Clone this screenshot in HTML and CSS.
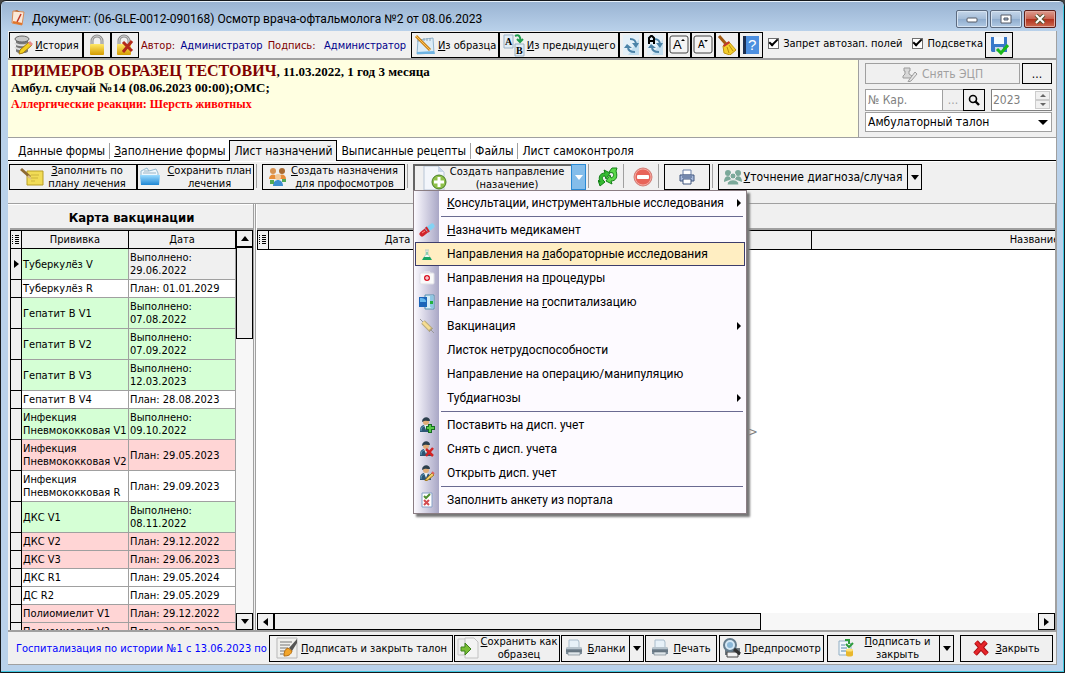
FILE: index.html
```
<!DOCTYPE html>
<html lang="ru">
<head>
	<meta charset="UTF-8">
	<title>Документ</title>
	<link rel="stylesheet" href="styles.css">
</head>
<body>

	<svg class="defs">
		<symbol id="lock" viewBox="0 0 20 22">
			<path d="M5 11V7a5 5 0 0 1 10 0v4" fill="none" stroke="#8c8c8c" stroke-width="3"/>
			<path d="M5 11V7a5 5 0 0 1 10 0v4" fill="none" stroke="#d8d8d8" stroke-width="1"/>
			<rect x="3" y="10" width="14" height="11" rx="1" fill="url(#gold)"/>
		</symbol>
		<symbol id="printer" viewBox="0 0 18 18">
			<path d="M4 1h9l1 2v6H4z" fill="#e7f1f8" stroke="#a9bccb"/>
			<path d="M2 8h14l1 2v5H1v-5z" fill="#7e8e9b"/>
			<path d="M2 8h14l1 2H1z" fill="#b6c3cc"/>
			<path d="M3 13h12v3H3z" fill="#dfe6ea" stroke="#69767f" stroke-width=".6"/>
			<path d="M1 12h16" stroke="#56646e"/>
		</symbol>
		<symbol id="person" viewBox="0 0 16 16">
			<path d="M1 15c0-5 1-7 5-7s6 2 6 7z" fill="#2c5674"/>
			<path d="M5 8l2 5 2-5z" fill="#e8f0f4"/>
			<circle cx="7" cy="5" r="3" fill="#e0ad78"/>
			<path d="M3 5c0-6 8-6 8-1-3 0-5-1-8 1z" fill="#2d3f4c"/>
			<path d="M2 14c0-3 1-4 3-5" fill="none" stroke="#65a0bf"/>
		</symbol>
		<symbol id="sheet" viewBox="0 0 18 22">
			<path d="M1 1h16v20H1z" fill="#e4f0f8"/>
			<path d="M6 21L17 5v16z" fill="#c3dff0"/>
			<path d="M8 5c4 0 6 1 6 6M13 18c-5 0-7-2-7-5" fill="none" stroke="#4c83a8" stroke-width="2"/>
			<path d="M10 9h7l-3 5zM2 14l3-4 5 4z" fill="#4c83a8"/>
		</symbol>
		<symbol id="dots" viewBox="0 0 8 10">
			<path d="M0 .5h1M3 .5h4M0 2.500h1M3 2.500h4M0 4.500h1M3 4.500h4M0 6.500h1M3 6.500h4M0 8.500h1M3 8.500h4" stroke="#000"/>
		</symbol>
		<linearGradient id="gold" x1="0" x2="0" y1="0" y2="1">
			<stop offset="0" stop-color="#ffe969"/>
			<stop offset="1" stop-color="#d59b00"/>
		</linearGradient>
		<linearGradient id="blue" x1="0" x2="0" y1="0" y2="1">
			<stop offset="0" stop-color="#9cdcff"/>
			<stop offset="1" stop-color="#1e86d4"/>
		</linearGradient>
	</svg>

	<div class="window">
		<div class="titlebar">
			<svg class="logo" width="14" height="16" viewBox="0 0 14 16">
				<path d="M2 1l11 1-2 13-10-2z" fill="#fbe9d8" stroke="#d98a55"/>
				<path d="M3 1l3-1 3 2z" fill="#b5652f"/>
				<path d="M10 4l-4 8" stroke="#c0392b" stroke-width="1.5"/>
				<path d="M2 12l9 2" stroke="#e0742a" stroke-width="2"/>
			</svg>
			<span class="caption">Документ: (06-GLE-0012-090168) Осмотр врача-офтальмолога №2 от 08.06.2023</span>
			<button class="win" aria-label="Свернуть"><svg width="12" height="10"><rect x="1" y="4" width="10" height="4" rx="1" fill="#fff" stroke="#555a66"/></svg></button>
			<button class="win" aria-label="Развернуть"><svg width="12" height="10"><path d="M1 1h10v8H1z" fill="#fff" stroke="#555a66"/><path d="M4 4h4v2H4z" fill="#9db6d2" stroke="#555a66"/></svg></button>
			<button class="win close" aria-label="Закрыть окно"><svg width="12" height="10"><path d="M2 1l8 8M10 1L2 9" stroke="#553" stroke-width="4"/><path d="M2 1l8 8M10 1L2 9" stroke="#fff" stroke-width="2"/></svg></button>
		</div>

		<div class="content">
			<div class="topbar">
				<button class="btn history">
					<svg width="20" height="20" viewBox="0 0 20 20">
						<path d="M3 4v12c0 3 12 3 12 0V4z" fill="#777"/>
						<ellipse cx="9" cy="4" rx="7" ry="3" fill="#c9c9c9" stroke="#666"/>
						<path d="M2 8c2 3 12 3 14 0M2 12c2 3 12 3 14 0" fill="none" stroke="#ddd" stroke-width="2"/>
						<path d="M7 15l9-8 3 3-9 8-4 1z" fill="#f3d021" stroke="#a67d0c"/>
						<path d="M15 8l2-2 3 3-2 2z" fill="#e68a8a"/>
					</svg>
					<span><u>И</u>стория</span>
				</button>
				<button class="btn w28" aria-label="Заблокировать"><svg width="20" height="22"><use href="#lock"/></svg></button>
				<button class="btn w28" aria-label="Снять блокировку"><svg width="22" height="22" viewBox="0 0 22 22"><use href="#lock" width="20" height="22"/><path d="M9 8l9 9M18 7l-9 11" stroke="#b32a1c" stroke-width="3"/></svg></button>
				<span class="who first">Автор:</span>
				<span class="name">Администратор</span>
				<span class="who">Подпись:</span>
				<span class="name">Администратор</span>
				<button class="btn sample">
					<svg width="22" height="22" viewBox="0 0 22 22">
						<path d="M4 6l15-2 1 15-17 1z" fill="#dcecf7" stroke="#8fb4cf"/>
						<path d="M4 5v3M7 5v3M10 4v3M13 4v3M16 4v3" stroke="#8aa2b5"/>
						<path d="M3 18l17-1 1 3H3z" fill="#6fb4e3"/>
						<path d="M2 2l14 14" stroke="#c9841b" stroke-width="3"/>
						<path d="M2 2l14 14" stroke="#ffc251"/>
					</svg>
					<span><u>И</u>з образца</span>
				</button>
				<button class="btn previous">
					<svg width="22" height="24" viewBox="0 0 22 24">
						<path d="M1 2h9v13H1zM12 11h9v12h-9z" fill="#e2edf6" stroke="#9db3c6"/>
						<text x="2" y="12" class="letter">A</text>
						<text x="13" y="21" class="letter">B</text>
						<path d="M12 3c4-2 6 1 5 5M14 6l3 3 3-3" fill="none" stroke="#1f9b4c" stroke-width="2"/>
					</svg>
					<span><u>И</u>з предыдущего</span>
				</button>
				<button class="btn w24" aria-label="Обновить"><svg width="18" height="22"><use href="#sheet"/></svg></button>
				<button class="btn w24" aria-label="Обновить все"><svg width="18" height="22" viewBox="0 0 18 22"><use href="#sheet"/><path d="M3 10V4l2-2h1l2 2v6M3 7h5" fill="none" stroke="#000" stroke-width="2"/></svg></button>
				<button class="btn w24" aria-label="Крупнее"><svg width="20" height="20" viewBox="0 0 20 20"><rect x="1" y="1" width="18" height="17" rx="2" fill="#f4f4f4" stroke="#444"/><text x="4" y="14" class="big">A</text><path d="M12 6l2-2 2 2z"/></svg></button>
				<button class="btn w24" aria-label="Мельче"><svg width="20" height="20" viewBox="0 0 20 20"><rect x="1" y="1" width="18" height="17" rx="2" fill="#f4f4f4" stroke="#444"/><text x="5" y="13" class="small">A</text><path d="M11 5h4l-2 2z"/></svg></button>
				<button class="btn w24" aria-label="Очистить">
					<svg width="20" height="20" viewBox="0 0 20 20">
						<path d="M2 1l7 8" stroke="#a35a12" stroke-width="3"/>
						<path d="M6 11l6-4 7 8-6 5-6-2z" fill="#f3ce2c" stroke="#c1930d"/>
						<path d="M6 10l6-4 1 2-6 4z" fill="#c2382b"/>
						<path d="M10 12l2 6M12 10l4 6" stroke="#b98d0e"/>
					</svg>
				</button>
				<button class="btn w24" aria-label="Справка"><svg width="18" height="20" viewBox="0 0 18 20"><path d="M1 1h16v18H1z" fill="#4c8fe0"/><path d="M1 1h3v18H1z" fill="#1c2f50"/><text x="6" y="15" class="quest">?</text></svg></button>
				<label class="check"><input type="checkbox" checked>Запрет автозап. полей</label>
				<label class="check"><input type="checkbox" checked>Подсветка</label>
				<button class="btn w28" aria-label="Сохранить">
					<svg width="20" height="20" viewBox="0 0 20 20">
						<path d="M2 2h16v15H3l-1-1z" fill="#3878c9"/>
						<path d="M5 2h10v7H5z" fill="#f5faff"/>
						<path d="M6 12h8v5H6z" fill="#ccd9e8"/>
						<path d="M8 14l4 4 7-8" fill="none" stroke="#19b819" stroke-width="3"/>
					</svg>
				</button>
			</div>

			<div class="header">
				<div class="patient">
					<b class="fio">ПРИМЕРОВ ОБРАЗЕЦ ТЕСТОВИЧ</b><b>, 11.03.2022, 1 год 3 месяца</b><br>
					<b>Амбул. случай №14 (08.06.2023 00:00);ОМС;</b><br>
					<b class="allergy">Аллергические реакции: Шерсть животных</b>
				</div>
				<div class="card">
					<div class="row">
						<button class="btn sign" disabled>
							<svg width="16" height="16" viewBox="0 0 16 16"><path d="M2 2h6v3H7v3l3 2v2H1v-2l2-2V5H2z" fill="#d8d8d8" stroke="#9b9b9b"/><path d="M7 14l6-8 2 2-6 7-3 1z" fill="#e6e6e6" stroke="#9b9b9b"/></svg>
							<span>Снять ЭЦП</span>
						</button>
						<button class="btn dots">...</button>
					</div>
					<div class="row numbers">
						<input class="number" type="text" placeholder="№ Кар." aria-label="Номер карты" disabled>
						<button class="btn more" disabled>...</button>
						<button class="btn find" aria-label="Найти"><svg width="12" height="12" viewBox="0 0 12 12"><circle cx="5" cy="5" r="3.5" fill="none" stroke="#000" stroke-width="1.6"/><path d="M7 7l4 4" stroke="#000" stroke-width="2.4"/></svg></button>
						<div class="year">
							<input type="text" value="2023" aria-label="Год">
							<div class="spin">
								<button aria-label="Больше"><i class="up"></i></button>
								<button aria-label="Меньше"><i class="down"></i></button>
							</div>
						</div>
					</div>
					<div class="combo">
						<select aria-label="Вид талона"><option>Амбулаторный талон</option></select>
					</div>
				</div>
			</div>

			<div class="tabs">
				<button class="tab"><u>Д</u>анные формы</button>
				<button class="tab"><u>З</u>аполнение формы</button>
				<button class="tab active">Лист назначений</button>
				<button class="tab">Выписанные рецепты</button>
				<button class="tab">Файлы</button>
				<button class="tab">Лист самоконтроля</button>
			</div>

			<div class="tools">
				<button class="btn fill">
					<svg width="24" height="20" viewBox="0 0 24 20">
						<path d="M7 4h16v14H7z" fill="#f1dc56" stroke="#b89d22"/>
						<path d="M11 8h8M11 11h7M11 14h4" stroke="#cdb43a"/>
						<path d="M1 2l9 8" stroke="#8d6a32" stroke-width="3"/>
						<path d="M9 8l3 5-5-3z" fill="#ddc189"/>
					</svg>
					<span><u>З</u>аполнить по<br>плану лечения</span>
				</button>
				<button class="btn keep">
					<svg width="22" height="22" viewBox="0 0 22 22">
						<path d="M2 5l6-3 2 3 7-2 2 4v6H2z" fill="#eef7fc" stroke="#94b9d0"/>
						<path d="M4 7h13M5 5h5" stroke="#9bb4c5"/>
						<path d="M1 9h20l-1 10H2z" fill="url(#blue)"/>
					</svg>
					<span><u>С</u>охранить план<br>лечения</span>
				</button>
				<i class="split"></i>
				<button class="btn prof">
					<svg width="18" height="20" viewBox="0 0 18 20">
						<circle cx="4" cy="4" r="3" fill="#d79352"/><circle cx="13" cy="4" r="3" fill="#a86a31"/>
						<path d="M0 12c0-6 8-6 8 0zM9 12c0-6 8-6 8 0z" fill="#e78d38"/>
						<circle cx="9" cy="10" r="3" fill="#f2c796"/>
						<path d="M4 19c0-8 10-8 10 0z" fill="#3b8ed0"/>
						<path d="M1 13h4v4H1zM13 12h4v3h-4z" fill="#52a954"/>
					</svg>
					<span><u>С</u>оздать назначения<br>для профосмотров</span>
				</button>
				<i class="split"></i>

				<div class="create">
					<button class="btn direct">
						<svg width="26" height="24" viewBox="0 0 26 24">
							<path d="M2 0h14l6 6v18H2z" fill="#f3f6fb" stroke="#b8c5d6"/>
							<path d="M16 0v6h6z" fill="#c9d8ea"/>
							<circle cx="17" cy="16" r="7" fill="#8fc04a" stroke="#477d24"/>
							<path d="M17 11v10M12 16h10" stroke="#fff" stroke-width="3"/>
						</svg>
						<span>Создать направление<br>(назачение)</span>
					</button>
					<button class="arrow open" aria-label="Открыть меню"><i class="down"></i></button>

					<div class="menu">
						<button class="item more-items"><span><u>К</u>онсультации, инструментальные исследования</span></button>
						<hr>
						<button class="item">
							<svg class="ico" viewBox="0 0 16 16"><path d="M3 12l5-4" stroke="#d1242a" stroke-width="5" stroke-linecap="round"/><path d="M9 7l4-3" stroke="#83d3f4" stroke-width="5" stroke-linecap="round"/><path d="M7 5l3 5" stroke="#d1242a" stroke-width="2"/><path d="M3 11l3-2" stroke="#ff8b83"/></svg>
							<span><u>Н</u>азначить медикамент</span>
						</button>
						<button class="item selected">
							<svg class="ico" viewBox="0 0 16 16"><path d="M6 4h4M7 4v4l-3 5h8L9 8V4" fill="#eefaf5" stroke="#bdcec8"/><path d="M5 11h6l2 3H3z" fill="#17a663"/><path d="M8 6v3" stroke="#40b681"/></svg>
							<span>Направления на <u>л</u>абораторные исследования</span>
						</button>
						<button class="item">
							<svg class="ico" viewBox="0 0 16 16"><path d="M5 4V2h6v2" fill="none" stroke="#eee"/><rect x="1" y="3" width="14" height="11" rx="1" fill="#fafafa" stroke="#dedee5"/><circle cx="8" cy="8" r="3" fill="#d90f1e"/><path d="M8 6v4M6 8h4" stroke="#fff"/></svg>
							<span>Направления на <u>п</u>роцедуры</span>
						</button>
						<button class="item">
							<svg class="ico" viewBox="0 0 16 16"><path d="M6 1h9v14H6z" fill="#d7edf6" stroke="#5590b0"/><path d="M11 2l3-1v14l-3-2z" fill="#8ec7e5"/><path d="M0 3h8v10H0z" fill="#1c65b8"/><path d="M1 4c4 0 6 1 6 4H1z" fill="#67b8ed"/><path d="M11 7h3v3h-3z" fill="#24b23e"/></svg>
							<span>Направление на <u>г</u>оспитализацию</span>
						</button>
						<button class="item more-items">
							<svg class="ico" viewBox="0 0 16 16"><path d="M1 1l3 3M12 12l3 3M14 10l-4 4" stroke="#999"/><path d="M4 4l8 8" stroke="#b7a87b" stroke-width="5"/><path d="M4 4l7 7" stroke="#f6dc91" stroke-width="3"/></svg>
							<span>Вакцинация</span>
						</button>
						<button class="item"><span>Листок нетрудоспособности</span></button>
						<button class="item"><span>Направление на операцию/манипуляцию</span></button>
						<button class="item more-items"><span>Тубдиагнозы</span></button>
						<hr>
						<button class="item">
							<svg class="ico" viewBox="0 0 16 16"><use href="#person"/><path d="M11 7v9M7 11h9" stroke="#176c23" stroke-width="4"/><path d="M11 8v7M8 11h7" stroke="#58ca48" stroke-width="2"/></svg>
							<span>Поставить на дисп. учет</span>
						</button>
						<button class="item">
							<svg class="ico" viewBox="0 0 16 16"><use href="#person"/><path d="M7 8l7 7M14 7l-7 8" stroke="#d32424" stroke-width="2.5"/></svg>
							<span>Снять с дисп. учета</span>
						</button>
						<button class="item">
							<svg class="ico" viewBox="0 0 16 16"><use href="#person"/><path d="M7 14l6-6 2 2-6 5-3 1z" fill="#f1d16b" stroke="#a37922"/><path d="M13 7l2 2" stroke="#df6260" stroke-width="2"/></svg>
							<span>Открыть дисп. учет</span>
						</button>
						<hr>
						<button class="item">
							<svg class="ico" viewBox="0 0 16 16"><path d="M3 1h10v14H3z" fill="#fff" stroke="#87a2c8"/><path d="M5 4l2 2 4-4" fill="none" stroke="#508e31" stroke-width="2"/><path d="M5 8l5 5M10 8l-5 5" stroke="#d34b50" stroke-width="2"/></svg>
							<span>Заполнить анкету из портала</span>
						</button>
					</div>
				</div>

				<i class="split"></i>
				<button class="flat" aria-label="Обновить список">
					<svg width="20" height="20" viewBox="0 0 20 20">
						<path d="M2 15c-2-5 0-9 5-9l-1-3 6 3-4 6-1-3c-3 0-3 2-2 4l2 2-5 4-2-6z" fill="#35bb32" stroke="#137f17"/>
						<path d="M18 4c2 6 0 10-5 10l1 3-6-3 4-6 1 3c3-1 3-3 2-5l-4-1 3-4h5z" fill="#5bd94a" stroke="#137f17"/>
					</svg>
				</button>
				<i class="split"></i>
				<button class="flat" aria-label="Удалить"><svg width="20" height="20" viewBox="0 0 20 20"><circle cx="10" cy="10" r="9" fill="#e8645a" stroke="#cf817a"/><circle cx="10" cy="10" r="8" fill="none" stroke="#f4aaa2"/><rect x="4" y="8" width="12" height="4" rx="1" fill="#fff"/></svg></button>
				<i class="split"></i>
				<button class="btn print" aria-label="Печать">
					<svg width="16" height="16" viewBox="0 0 16 16"><path d="M4 1h8v5H4z" fill="#fff" stroke="#6b80a8"/><path d="M1 6h14v6H1z" fill="#a9bbdc" stroke="#40577f"/><path d="M4 10h8v5H4z" fill="#fff" stroke="#40577f"/><path d="M3 8h10" stroke="#40577f"/></svg>
				</button>
				<i class="split"></i>
				<button class="btn diag">
					<svg width="18" height="18" viewBox="0 0 18 18"><g fill="#7ba99a"><circle cx="4" cy="5" r="3"/><circle cx="14" cy="5" r="3"/><path d="M0 14c0-7 6-7 8-3zM18 14c0-7-6-7-8-3z"/></g><g fill="#7ba99a" stroke="#f0f0f0"><circle cx="9" cy="8" r="3"/><path d="M3 17c0-7 12-7 12 0z"/></g></svg>
					<span><u>У</u>точнение диагноза/случая</span>
				</button>
				<button class="btn drop" aria-label="Варианты уточнения"><i class="down"></i></button>
			</div>

			<div class="work">
				<div class="panel vaccines">
					<div class="panel-title">Карта вакцинации</div>
					<div class="grid">
						<div class="rows">
							<table>
								<thead>
									<tr><th class="mark"><svg width="8" height="10"><use href="#dots"/></svg></th><th>Прививка</th><th>Дата</th></tr>
								</thead>
								<tbody>
									<tr class="done current"><td class="mark"><i class="right"></i></td><td>Туберкулёз V</td><td>Выполнено:<br>29.06.2022</td></tr>
									<tr><td class="mark"></td><td>Туберкулёз R</td><td>План: 01.01.2029</td></tr>
									<tr class="done"><td class="mark"></td><td>Гепатит B V1</td><td>Выполнено:<br>07.08.2022</td></tr>
									<tr class="done"><td class="mark"></td><td>Гепатит B V2</td><td>Выполнено:<br>07.09.2022</td></tr>
									<tr class="done"><td class="mark"></td><td>Гепатит B V3</td><td>Выполнено:<br>12.03.2023</td></tr>
									<tr><td class="mark"></td><td>Гепатит B V4</td><td>План: 28.08.2023</td></tr>
									<tr class="done"><td class="mark"></td><td>Инфекция<br>Пневмококковая V1</td><td>Выполнено:<br>09.10.2022</td></tr>
									<tr class="late"><td class="mark"></td><td>Инфекция<br>Пневмококковая V2</td><td>План: 29.05.2023</td></tr>
									<tr><td class="mark"></td><td>Инфекция<br>Пневмококковая R</td><td>План: 29.09.2023</td></tr>
									<tr class="done"><td class="mark"></td><td>ДКС V1</td><td>Выполнено:<br>08.11.2022</td></tr>
									<tr class="late"><td class="mark"></td><td>ДКС V2</td><td>План: 29.12.2022</td></tr>
									<tr class="late"><td class="mark"></td><td>ДКС V3</td><td>План: 29.06.2023</td></tr>
									<tr><td class="mark"></td><td>ДКС R1</td><td>План: 29.05.2024</td></tr>
									<tr><td class="mark"></td><td>ДС R2</td><td>План: 29.05.2029</td></tr>
									<tr class="late"><td class="mark"></td><td>Полиомиелит V1</td><td>План: 29.12.2022</td></tr>
									<tr class="late"><td class="mark"></td><td>Полиомиелит V2</td><td>План: 29.05.2023</td></tr>
								</tbody>
							</table>
						</div>
						<div class="vscroll">
							<button aria-label="Вверх"><i class="up"></i></button>
							<div class="thumb"></div>
							<button class="end" aria-label="Вниз"><i class="down"></i></button>
						</div>
					</div>
				</div>

				<div class="panel orders">
					<div class="panel-title"></div>
					<div class="heads">
						<span class="mark"><svg width="8" height="10"><use href="#dots"/></svg></span>
						<span class="date">Дата</span>
						<span class="blank"></span>
						<span class="title">Название</span>
					</div>
					<div class="empty">&gt;</div>
					<div class="hscroll">
						<button aria-label="Влево"><i class="left"></i></button>
						<div class="thumb"></div>
						<button class="end" aria-label="Вправо"><i class="right"></i></button>
					</div>
				</div>
			</div>

			<div class="footer">
				<span class="note">Госпитализация по истории №1 с 13.06.2023 по</span>
				<button class="btn signclose">
					<svg width="24" height="22" viewBox="0 0 24 22">
						<path d="M2 1h20v20H2z" fill="#f0f0ee" stroke="#b7b7b7"/>
						<path d="M5 5h12M5 8h10M5 11h8M5 14h5M5 17h4" stroke="#777" stroke-width="1"/>
						<path d="M22 2l-8 9 3 3 5-8z" fill="#555"/>
						<path d="M13 11l4 3c-1 4-4 5-8 5 0-4 1-7 4-8z" fill="#f2a52a" stroke="#b46c10"/>
					</svg>
					<span><u>П</u>одписать и закрыть талон</span>
				</button>
				<button class="btn saveas">
					<svg width="22" height="22" viewBox="0 0 22 22"><path d="M1 2h12l3 3v13H1z" fill="#eee" stroke="#c7c7c7"/><path d="M8 1h9l4 4v16H8z" fill="#f3f3f3" stroke="#c1c1c1"/><path d="M4 10h4V6l6 6-6 6v-4H4z" fill="#79bd35" stroke="#3f831c"/></svg>
					<span><u>С</u>охранить как<br>образец</span>
				</button>
				<button class="btn blanks"><svg width="18" height="18"><use href="#printer"/></svg><span><u>Б</u>ланки</span></button>
				<button class="btn drop" aria-label="Список бланков"><i class="down"></i></button>
				<button class="btn printing"><svg width="18" height="18"><use href="#printer"/></svg><span><u>П</u>ечать</span></button>
				<button class="btn preview">
					<svg width="20" height="20" viewBox="0 0 20 20"><path d="M3 10h15v7H3z" fill="#6d777e"/><path d="M5 14h11v5H5z" fill="#f2f2f2" stroke="#444"/><circle cx="8" cy="7" r="6" fill="#d4e8f6" stroke="#657d8e" stroke-width="2"/><circle cx="8" cy="7" r="3" fill="#8cb8d8"/><path d="M12 11l6 5" stroke="#333" stroke-width="3"/></svg>
					<span><u>П</u>редпросмотр</span>
				</button>
				<button class="btn finish">
					<svg width="18" height="18" viewBox="0 0 18 18"><path d="M2 2h9l3 3v11H2z" fill="#f1f7fc" stroke="#91afc4"/><path d="M4 6h4M4 9h6M4 12h5" stroke="#5988ab"/><path d="M8 1h4v4M9 5l3 3 4-4" fill="none" stroke="#2d9c3c" stroke-width="2"/><path d="M9 11v5c0 2 7 2 7 0v-5z" fill="#e9b82e"/><ellipse cx="12.500" cy="11" rx="3.500" ry="1.500" fill="#ffe27a"/></svg>
					<span><u>П</u>одписать и<br>закрыть</span>
				</button>
				<button class="btn drop" aria-label="Варианты подписи"><i class="down"></i></button>
				<button class="btn closing">
					<svg width="16" height="16" viewBox="0 0 16 16"><path d="M3 2c3 3 7 8 11 12M13 2C9 6 5 11 2 14" stroke="#a80f13" stroke-width="5"/><path d="M3 2c3 3 7 8 11 12M13 2C9 6 5 11 2 14" stroke="#e6262b" stroke-width="3"/></svg>
					<span><u>З</u>акрыть</span>
				</button>
			</div>
		</div>
	</div>

</body>
</html>
```
FILE: styles.css
```
* {
	box-sizing: border-box;
}
body {
	margin: 0;
	font-family: "DejaVu Sans Condensed", "DejaVu Sans", sans-serif;
	font-size: 11px;
	line-height: 13px;
	color: #000;
	background: #444;
}
button, input, select {
	font: inherit;
	color: inherit;
	margin: 0;
	padding: 0;
	border-radius: 0;
}
button {
	flex: none;
	display: flex;
	align-items: center;
	justify-content: center;
	white-space: nowrap;
}
svg {
	flex: none;
	display: block;
}
u {
	text-decoration-thickness: 1px;
	text-underline-offset: 1px;
}
.defs {
	position: absolute;
	width: 0;
	height: 0;
}

/* стрелки */
.up, .down, .left, .right {
	flex: none;
	width: 0;
	height: 0;
	border: 4px solid transparent;
}
.up {
	border-top: 0;
	border-bottom: 5px solid #000;
}
.down {
	border-bottom: 0;
	border-top: 5px solid #000;
}
.left {
	border-left: 0;
	border-right: 5px solid #000;
}
.right {
	border-right: 0;
	border-left: 5px solid #000;
}

/* окно */
.window {
	height: 100vh;
	display: flex;
	flex-direction: column;
	padding: 0 7px 7px;
	border: 1px solid #15181c;
	border-radius: 6px 6px 0 0;
	background: #b9d1ea;
	box-shadow: inset 0 1px #e8f1fa, inset -1px -1px #3fc7e0;
	overflow: hidden;
}
.titlebar {
	flex: none;
	display: flex;
	gap: 2px;
	height: 29px;
	margin: 1px -6px 0;
	padding: 8px 7px 0 9px;
	background: linear-gradient(#9ab4d3, #b9d1ea);
	font-family: Roboto, sans-serif;
	font-size: 12px;
	line-height: 18px;
}
.caption {
	flex: 1;
	padding-left: 5px;
	white-space: nowrap;
	overflow: hidden;
}
.win {
	width: 32px;
	height: 18px;
	border: 1px solid #5c6b80;
	border-radius: 2px;
	background: linear-gradient(#c5d6e9, #a3bcd8 50%, #8faccd 50%, #b1cae4);
	box-shadow: inset 0 0 0 1px #d7e4f2;
}
.win.close {
	border-color: #5b1f1b;
	background: linear-gradient(#dd9c8f, #c8614f 50%, #b02f1b 50%, #cc6a50);
	box-shadow: inset 0 0 0 1px #e2a99e;
}
.content {
	flex: 1;
	min-height: 0;
	display: flex;
	flex-direction: column;
	background: #f0f0f0;
	border-right: 1px solid #a0a0a0;
}

/* кнопки */
.btn {
	height: 26px;
	gap: 2px;
	border: 1px solid #000;
	background: #f0f0f0;
	overflow: hidden;
}
.btn:disabled {
	color: #a0a0a0;
	border-color: #a0a0a0;
}
.w24 {
	width: 24px;
}
.w28 {
	width: 28px;
}
.drop {
	width: 15px;
	margin-left: -1px;
}
.flat, .arrow {
	height: 26px;
	border: 0;
	background: none;
}
.split {
	width: 1px;
	height: 24px;
	background: #a0a0a0;
}

/* верхняя панель */
.topbar {
	flex: none;
	display: flex;
	align-items: center;
	height: 29px;
	padding: 1px 1px 0;
	border-bottom: 2px solid #a0a0a0;
}
.history {
	width: 74px;
}
.who {
	color: #800000;
	width: 57px;
}
.who.first {
	width: 42px;
	padding-left: 2px;
}
.name {
	color: #00008b;
	width: 88px;
	white-space: nowrap;
}
.name + .btn {
	margin-left: auto;
}
.sample {
	width: 88px;
}
.previous {
	width: 120px;
}
.letter {
	font: bold 10px "Liberation Serif", serif;
}
.big {
	font: 13px "Liberation Sans", sans-serif;
}
.small {
	font: 10px "Liberation Sans", sans-serif;
}
.quest {
	font: 15px "Liberation Sans", sans-serif;
	fill: #fff;
}
.check {
	display: flex;
	align-items: center;
	gap: 4px;
	white-space: nowrap;
	margin: 0 2px 4px 5px;
}
.check + .check {
	margin-left: 8px;
}
.check input {
	appearance: none;
	width: 11px;
	height: 11px;
	border: 1px solid #707070;
	background: #fff;
	display: grid;
	place-items: center;
}
.check input:checked::before {
	content: "";
	width: 7px;
	height: 3px;
	border: solid #000;
	border-width: 0 0 2px 2px;
	transform: rotate(-45deg);
	margin-bottom: 3px;
}
.topbar .w28:last-child {
	margin-right: 42px;
}

/* пациент */
.header {
	flex: none;
	display: flex;
	height: 78px;
	border-bottom: 1px solid #a0a0a0;
}
.patient {
	flex: 1;
	padding: 3px;
	background: #ffffe1;
	border-right: 1px solid #a0a0a0;
	font-family: "Liberation Serif", serif;
	font-size: 13px;
	line-height: 16px;
}
.fio {
	font-size: 16px;
	color: #800000;
}
.allergy {
	font-size: 12px;
	color: #f00;
}
.card {
	width: 197px;
	padding: 3px 4px 0 6px;
	font-size: 12px;
	line-height: 16px;
}
.row {
	display: flex;
}
.sign {
	flex: 1;
	height: 21px;
	margin-right: 2px;
	gap: 4px;
}
.dots {
	width: 30px;
	height: 21px;
}
.numbers {
	margin: 5px 0 1px;
}
.number {
	flex: 1;
	min-width: 0;
	height: 22px;
	padding: 0 2px;
	border: 1px solid #a0a0a0;
	background: #fff;
}
.number::placeholder {
	color: #808080;
	opacity: 1;
}
.more {
	width: 22px;
	height: 22px;
	margin-left: -1px;
}
.find {
	width: 22px;
	height: 22px;
	margin-left: -1px;
}
.year {
	display: flex;
	width: 61px;
	height: 22px;
	margin-left: 6px;
	padding: 1px;
	border: 1px solid #808080;
	background: #fff;
}
.year input {
	flex: 1;
	min-width: 0;
	border: 0;
	color: #808080;
	background: none;
}
.spin {
	width: 15px;
	display: flex;
	flex-direction: column;
}
.spin button {
	flex: 1;
	border: 1px solid #ccc;
	background: #f0f0f0;
}
.spin i {
	border-left-width: 3px;
	border-right-width: 3px;
}
.spin .up {
	border-bottom: 3px solid #666;
}
.spin .down {
	border-top: 3px solid #666;
}
.combo {
	position: relative;
}
.combo select {
	appearance: none;
	width: 100%;
	height: 20px;
	padding: 0 2px;
	border: 1px solid #a0a0a0;
	background: #fff;
	display: block;
}
.combo::after {
	content: "";
	position: absolute;
	right: 4px;
	top: 8px;
	border: 5px solid transparent;
	border-top-color: #000;
	border-bottom: 0;
}

/* вкладки */
.tabs {
	flex: none;
	display: flex;
	align-items: flex-end;
	height: 23px;
	padding-left: 6px;
	background: #fff;
	border-bottom: 1px solid #000;
	font-size: 12px;
	line-height: 16px;
}
.tab {
	height: 16px;
	margin-bottom: 1px;
	padding: 0 4px;
	border: 0;
	border-right: 1px solid #a0a0a0;
	background: none;
}
.tab:nth-child(2), .tab:last-child {
	border-right: 0;
}
.tab.active {
	height: 21px;
	margin-bottom: -1px;
	border: 1px solid #000;
	border-bottom: 0;
	background: #f0f0f0;
}

/* панель назначений */
.tools {
	flex: none;
	display: flex;
	align-items: flex-start;
	height: 43px;
	padding: 3px 1px 0;
	border-bottom: 1px solid #a0a0a0;
	box-shadow: inset 0 1px #fff;
}
.fill {
	width: 128px;
	gap: 4px;
}
.keep {
	width: 117px;
	gap: 6px;
}
.prof {
	width: 143px;
	gap: 4px;
}
.tools .split {
	margin: 0 5px 0 2px;
}
.create {
	position: relative;
	display: flex;
}
.direct {
	width: 158px;
	border: 2px solid #646464;
	border-right: 0;
	border-bottom: 0;
}
.arrow.open {
	width: 15px;
	border: 1px solid #2a8ad4;
	background: #84bdea;
}
.arrow .down {
	border-top-color: #fff;
}
.flat {
	width: 27px;
}
.print {
	width: 46px;
}
.diag {
	width: 190px;
	font-size: 12px;
}

/* меню */
.menu {
	position: absolute;
	z-index: 5;
	left: 0;
	top: 26px;
	width: 334px;
	border: 1px solid #8a7d83;
	padding: 0 1px 1px;
	background: linear-gradient(90deg, #fcfaff, #a9a7c6 25px, #fdfaff 25px);
	box-shadow: 3px 3px 2px #777;
	font-family: Roboto, sans-serif;
	font-size: 12px;
	line-height: 16px;
}
.menu hr {
	height: 1px;
	margin: 1px 2px 1px 26px;
	border: 0;
	background: #6a6a91;
}
.item {
	width: 100%;
	height: 24px;
	justify-content: flex-start;
	padding: 0 3px;
	border: 1px solid transparent;
	background: none;
}
.item span {
	padding-left: 9px;
}
.item > span:first-child {
	padding-left: 28px;
}
.ico {
	width: 16px;
	height: 16px;
	margin-right: 3px;
}
.item.selected {
	border-color: #3d3d6b;
	background: #ffeec2;
}
.more-items::after {
	content: "";
	margin-left: auto;
	border: 4px solid transparent;
	border-left-color: #000;
	border-right: 0;
}

/* рабочая область */
.work {
	flex: 1;
	min-height: 0;
	display: flex;
	border-bottom: 2px solid #a0a0a0;
	box-shadow: inset 0 1px #fff;
}
.panel {
	display: flex;
	flex-direction: column;
	min-width: 0;
}
.panel-title {
	flex: none;
	height: 26px;
	padding-top: 6px;
	border-bottom: 2px solid #a0a0a0;
	font-size: 13px;
	font-weight: bold;
	line-height: 16px;
	text-align: center;
}
.vaccines {
	width: 248px;
	padding-left: 2px;
	border-right: 3px double #a0a0a0;
}
.grid {
	flex: 1;
	min-height: 0;
	display: flex;
	border-left: 1px solid #000;
}
.rows {
	flex: 1;
	overflow: hidden;
}
table {
	width: 100%;
	table-layout: fixed;
	border-spacing: 0;
	background: #fff;
}
th {
	height: 19px;
	padding: 0;
	border: solid #000;
	border-width: 1px 1px 1px 0;
	background: #f0f0f0;
	font-weight: normal;
}
td {
	height: 18px;
	padding: 2px 1px;
	border-right: 1px solid #a0a0a0;
	border-bottom: 1px solid #a0a0a0;
	white-space: nowrap;
}
.done td {
	background: #d5ffd5;
}
.late td {
	background: #ffd5d5;
}
.current td:last-child {
	background: #f0f0f0;
}
th.mark {
	width: 11px;
}
th.mark svg {
	margin: 0 auto;
}
tr td.mark {
	background: #f0f0f0;
	border-color: #000;
	padding-left: 3px;
}
td.mark i {
	display: block;
}
.vscroll {
	width: 17px;
	display: flex;
	flex-direction: column;
	background: #f7f7f7;
}
.vscroll button, .hscroll button {
	width: 17px;
	height: 17px;
	border: 1px solid #000;
	background: #f0f0f0;
}
.thumb {
	border: 1px solid #000;
	background: #f0f0f0;
}
.vscroll .thumb {
	height: 23%;
}
.end {
	margin: auto 0 0 auto;
}
.orders {
	flex: 1;
	padding-left: 1px;
	background: #fff;
	border-right: 1px solid #a0a0a0;
}
.orders .panel-title {
	background: #f0f0f0;
}
.heads {
	flex: none;
	display: flex;
	height: 20px;
	border: 1px solid #000;
	border-right: 0;
	background: #f0f0f0;
	line-height: 18px;
	text-align: center;
	overflow: hidden;
}
.heads span {
	flex: none;
	border-right: 1px solid #000;
}
.heads .mark {
	width: 11px;
	padding: 4px 1px 0;
}
.heads .date {
	width: 258px;
}
.heads .blank {
	width: 285px;
}
.heads .title {
	width: 446px;
}
.empty {
	flex: 1;
	display: flex;
	align-items: center;
	padding-left: 491px;
	font-size: 13px;
	color: #808080;
}
.hscroll {
	flex: none;
	display: flex;
	height: 17px;
	background: #f7f7f7;
}
.hscroll .thumb {
	width: 61%;
}

/* нижняя панель */
.footer {
	flex: none;
	display: flex;
	align-items: center;
	height: 33px;
	padding: 0 3px 0 8px;
	border-bottom: 1px solid #a0a0a0;
}
.footer .btn {
	height: 27px;
	margin-left: 1px;
}
.footer .drop {
	margin-left: -1px;
}
.note {
	flex: 1;
	min-width: 0;
	color: #00f;
	white-space: nowrap;
}
.signclose {
	width: 184px;
}
.saveas {
	width: 106px;
}
.blanks {
	width: 69px;
	gap: 4px;
}
.printing {
	width: 72px;
	gap: 4px;
}
.footer .preview {
	width: 105px;
	margin-left: 2px;
}
.footer .finish {
	width: 113px;
	margin-left: 3px;
	gap: 10px;
}
.footer .closing {
	width: 93px;
	margin-left: 6px;
	gap: 6px;
}
```
